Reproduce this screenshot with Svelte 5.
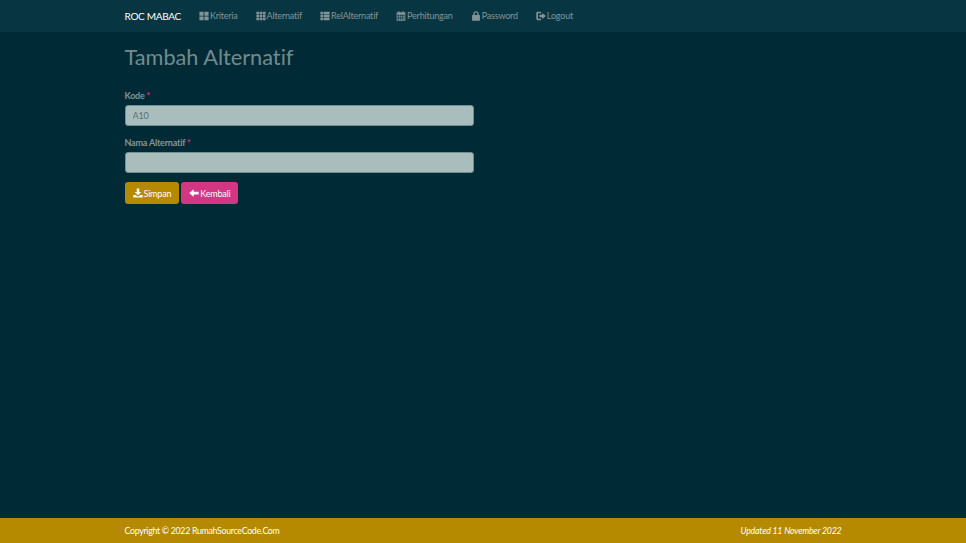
<script>
    let kode = $state('A10');
    let nama = $state('');

    const menu = [
        { label: 'Kriteria', icon: 'large' },
        { label: 'Alternatif', icon: 'th' },
        { label: 'RelAlternatif', icon: 'list' },
        { label: 'Perhitungan', icon: 'calendar' },
        { label: 'Password', icon: 'lock' },
        { label: 'Logout', icon: 'logout' }
    ];
</script>

{#snippet icon(name)}
    <svg class="icon" viewBox="0 0 12 12" fill="currentColor" aria-hidden="true">
        {#if name === 'large'}
            <path d="M.5 1h5v4.600h-5zM6.500 1h5v4.600h-5zM.5 6.500h5v4.600h-5zM6.500 6.500h5v4.600h-5z" />
        {:else if name === 'th'}
            <path d="M.5 1h3.200v2.900H.5zM4.400 1h3.200v2.900H4.400zM8.300 1h3.200v2.900H8.300zM.5 4.600h3.200v2.900H.5zM4.400 4.600h3.200v2.900H4.400zM8.300 4.600h3.200v2.900H8.300zM.5 8.200h3.200v2.900H.5zM4.400 8.200h3.200v2.900H4.400zM8.300 8.200h3.200v2.900H8.300z" />
        {:else if name === 'list'}
            <path d="M.5 1h3v2.900h-3zM4.200 1h7.300v2.900H4.200zM.5 4.600h3v2.900h-3zM4.200 4.600h7.300v2.900H4.200zM.5 8.200h3v2.900h-3zM4.200 8.200h7.300v2.900H4.200z" />
        {:else if name === 'calendar'}
            <path fill-rule="evenodd" d="M.8 1.500h2V.3h1.400v1.200h3.600V.3h1.400v1.200h2v10.200H.8zM1.800 4.400v1.500h1.800V4.400zM4.300 4.400v1.500H6V4.400zM6.700 4.400v1.500h1.700V4.400zM9 4.400v1.500h1.200V4.400zM1.800 6.500V8h1.800V6.500zM4.300 6.500V8H6V6.500zM6.700 6.500V8h1.700V6.500zM9 6.500V8h1.200V6.500zM1.800 8.600v1.500h1.800V8.600zM4.300 8.600v1.500H6V8.600zM6.700 8.600v1.500h1.700V8.600zM9 8.600v1.500h1.200V8.600z" />
        {:else if name === 'lock'}
            <path fill-rule="evenodd" d="M2 4.800h.8V3.500C2.800 1.400 4 .2 6 .2s3.200 1.200 3.200 3.300v1.300h.8c.4 0 .7.3.7.7v5.600c0 .4-.3.7-.7.7H2c-.4 0-.7-.3-.7-.7V5.500c0-.4.3-.7.7-.7zM4.400 4.800h3.200V3.500C7.600 2.400 7 1.800 6 1.800s-1.600.6-1.600 1.700z" />
        {:else if name === 'logout'}
            <path d="M1.800 1h4.400v1.700H2.500v6.600h3.700V11H1.800C1 11 .4 10.400.4 9.600V2.400C.4 1.600 1 1 1.800 1zM7.500 2.500 11.900 6 7.500 9.500V7.400H4.200V4.600h3.300z" />
        {:else if name === 'save'}
            <path d="M4.500.6h3v4.300h2.400L6 8.800 2.100 4.900h2.400zM.4 8.400h2.800L6 10.600l2.800-2.200h2.800v3H.4z" />
        {:else if name === 'back'}
            <path d="M5.600 1.500v3h6v3.200h-6v3L.3 6.100z" />
        {/if}
    </svg>
{/snippet}

<nav class="navbar">
    <div class="container nav-inner">
        <a class="brand" href="#top">ROC MABAC</a>
        <ul class="nav">
            {#each menu as item}
                <li><a href="#top">{@render icon(item.icon)}{item.label}</a></li>
            {/each}
        </ul>
    </div>
</nav>

<main class="container content">
    <h1>Tambah Alternatif</h1>
    <form class="form" onsubmit={(e) => e.preventDefault()}>
        <div class="group">
            <label for="kode">Kode <span class="req">*</span></label>
            <input id="kode" type="text" bind:value={kode} />
        </div>
        <div class="group">
            <label for="nama">Nama Alternatif <span class="req">*</span></label>
            <input id="nama" type="text" bind:value={nama} />
        </div>
        <div class="actions">
            <button class="btn btn-warning" type="submit">{@render icon('save')}Simpan</button>
            <a class="btn btn-danger" href="#top">{@render icon('back')}Kembali</a>
        </div>
    </form>
</main>

<footer class="footer">
    <div class="container foot-inner">
        <span>Copyright © 2022 RumahSourceCode.Com</span>
        <em>Updated 11 November 2022</em>
    </div>
</footer>

<style>
    :global(body) {
        margin: 0;
        background-color: #002b36;
        font-family: Lato, "Open Sans", Arial, sans-serif;
        font-size: 9px;
        letter-spacing: -0.2px;
        font-variant-ligatures: none;
        color: #839496;
    }

    :global(#app) {
        display: flex;
        flex-direction: column;
        min-height: 543px;
    }

    .container {
        width: 717px;
        margin: 0 auto;
        box-sizing: border-box;
    }

    /* navbar */
    .navbar {
        height: 32px;
        background-color: #073642;
        flex: none;
    }

    .nav-inner {
        display: flex;
        align-items: center;
        height: 100%;
    }

    .brand {
        color: #fff;
        font-size: 10px;
        letter-spacing: -0.3px;
        text-decoration: none;
        margin-right: 18px;
        margin-top: -1px;
    }

    .nav {
        display: flex;
        list-style: none;
        gap: 18px;
        margin: 0;
        padding: 0;
    }

    .nav a {
        display: flex;
        align-items: center;
        color: #839496;
        text-decoration: none;
        margin-top: -1px;
    }

    .icon {
        width: 10px;
        height: 10px;
        margin-right: 1px;
        flex: none;
    }

    /* form */
    .content {
        flex: 1;
    }

    h1 {
        margin: 12px 0 18px;
        font-size: 21.700px;
        letter-spacing: 0;
        font-weight: 400;
        line-height: 27px;
        color: #748a8d;
    }

    .form {
        width: 349px;
    }

    .group {
        margin-bottom: 10px;
    }

    .group + .group {
        margin-bottom: 9px;
    }

    label {
        display: block;
        margin-bottom: 3px;
        font-weight: 700;
        line-height: 13px;
        color: #839496;
    }

    .req {
        color: #d33682;
    }

    input {
        display: block;
        width: 100%;
        height: 21px;
        box-sizing: border-box;
        padding: 0 7px;
        background-color: #a9bdbd;
        border: 1px solid #6f8f92;
        border-radius: 3px;
        color: #586e75;
        font: inherit;
        letter-spacing: inherit;
    }

    .actions {
        display: flex;
        gap: 2px;
    }

    .btn {
        display: flex;
        align-items: center;
        box-sizing: border-box;
        height: 22px;
        padding: 0 7px;
        border: 1px solid transparent;
        border-radius: 3px;
        color: #fff;
        font: inherit;
        letter-spacing: inherit;
        text-decoration: none;
    }

    .btn-warning {
        background-color: #b58900;
    }

    .btn-danger {
        background-color: #d33682;
    }

    /* footer */
    .footer {
        height: 25px;
        background-color: #b58900;
        color: #fff;
        flex: none;
    }

    .foot-inner {
        display: flex;
        justify-content: space-between;
        align-items: center;
        height: 100%;
        font-size: 8.800px;
        letter-spacing: -0.3px;
    }

    .foot-inner em {
        letter-spacing: -0.2px;
    }
</style>
